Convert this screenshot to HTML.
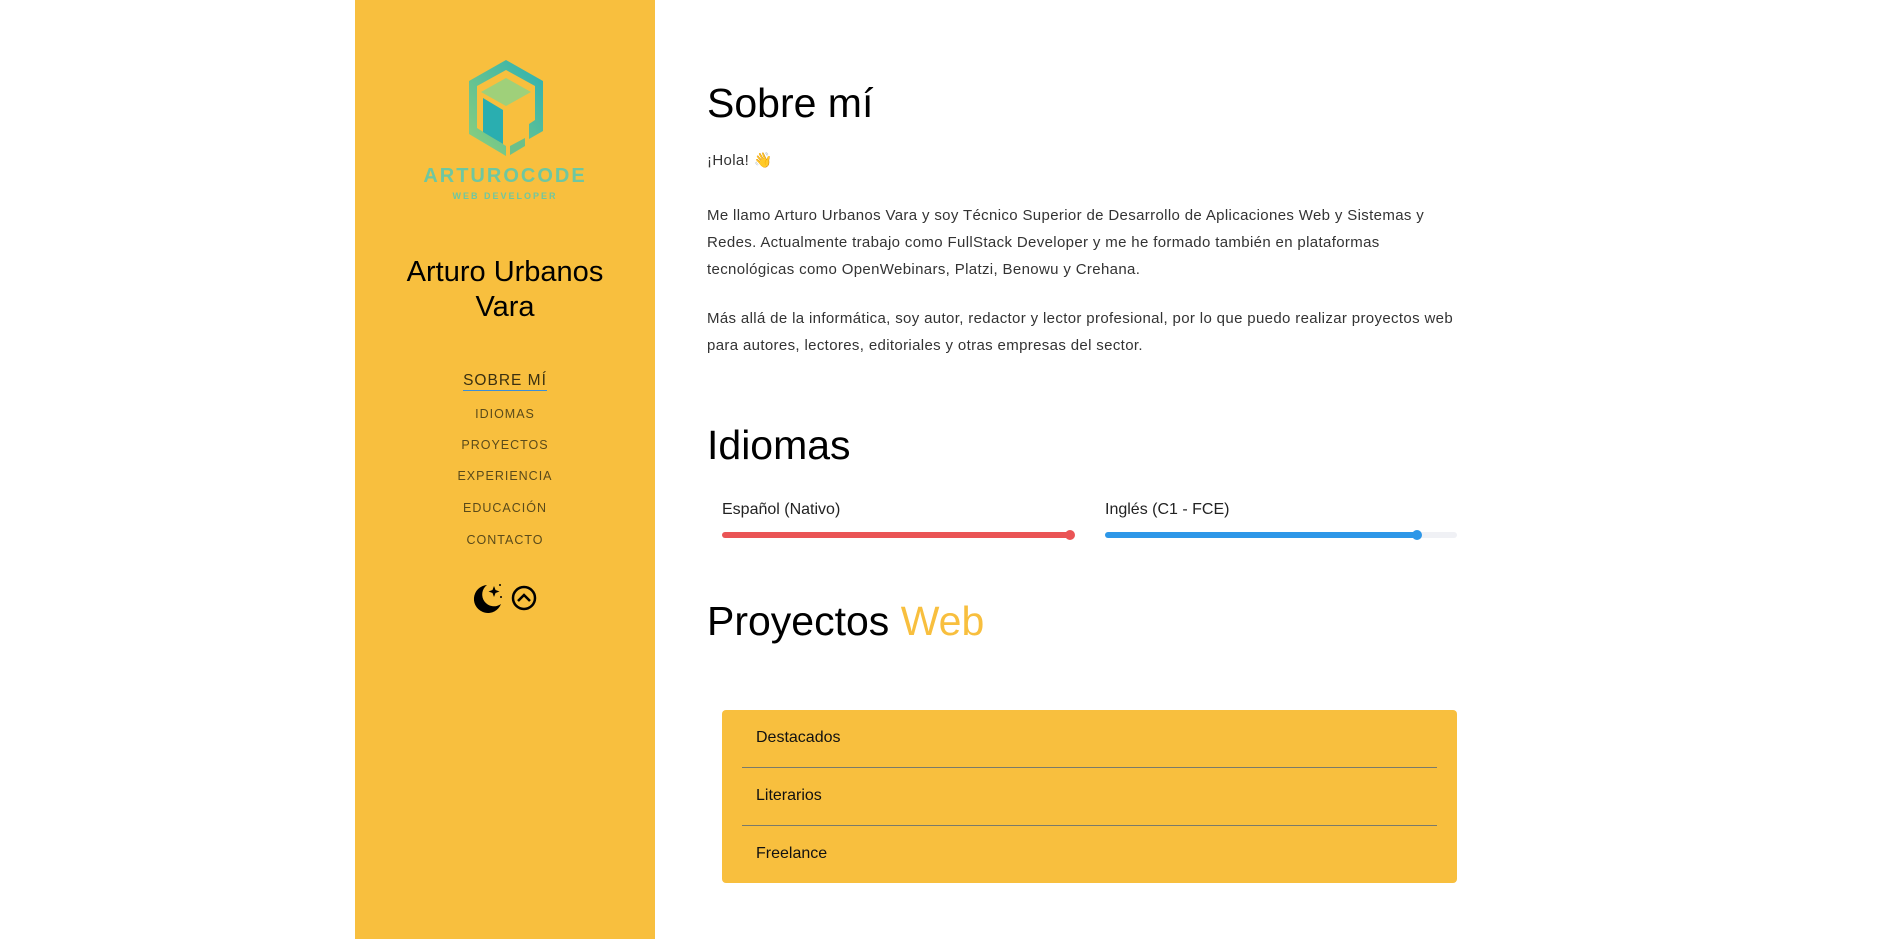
<!DOCTYPE html>
<html><head><meta charset="utf-8"><style>
*{margin:0;padding:0;box-sizing:border-box}
body{width:1879px;height:939px;background:#fff;font-family:"Liberation Sans",sans-serif;position:relative;overflow:hidden;color:#111}
.side{position:absolute;left:355px;top:0;width:300px;height:939px;background:#F8BF3E}
.abs{position:absolute}
.c{left:0;width:300px;text-align:center}
.nav{color:#5a4a1a;font-size:12.5px;letter-spacing:1px}
p.t{font-size:15px;color:#333;line-height:27px;width:760px;letter-spacing:0.35px}
h1{font-weight:normal;font-size:41px;color:#000;position:absolute;left:707px}
.bar{position:absolute;height:6px;border-radius:3px}
.dot{position:absolute;width:10px;height:10px;border-radius:5px}
</style></head><body>
<div class="side">
<svg class="abs" style="left:108px;top:56px" width="86" height="104" viewBox="0 0 86 104">
<defs><linearGradient id="g" x1="0" y1="1" x2="1" y2="0"><stop offset="0" stop-color="#8fd07a"/><stop offset="1" stop-color="#2bb0b4"/></linearGradient></defs>
<path d="M43 4 L80 25 L80 75 L66 83 L66 68 L72 64 L72 30 L43 14 L14 30 L14 72 L43 90 L43 100 L6 78 L6 25 Z" fill="url(#g)"/>
<path d="M43 22 L68 36 L43 50 L18 36 Z" fill="#9fd07a"/>
<path d="M20 42 L40 54 L40 88 L20 76 Z" fill="#2aaeb0"/>
<path d="M47 90 L62 82 L62 90 L47 99 Z" fill="#6cc08a"/>
</svg>
<div class="abs c" style="top:165px;font-size:20px;font-weight:bold;letter-spacing:2px;color:#6fc7a0">ARTUROCODE</div>
<div class="abs c" style="top:191px;font-size:9px;font-weight:bold;letter-spacing:2px;color:#6fc7a0">WEB DEVELOPER</div>
<div class="abs c" style="top:255px;font-size:29px;line-height:35px;color:#000">Arturo Urbanos<br>Vara</div>
<div class="abs c" style="top:372px;font-size:15.5px;letter-spacing:1px;color:#3a3010"><span style="border-bottom:1px solid #3a8fd8;padding-bottom:1px">SOBRE MÍ</span></div>
<div class="abs c nav" style="top:407px">IDIOMAS</div>
<div class="abs c nav" style="top:438px">PROYECTOS</div>
<div class="abs c nav" style="top:469px">EXPERIENCIA</div>
<div class="abs c nav" style="top:501px">EDUCACIÓN</div>
<div class="abs c nav" style="top:533px">CONTACTO</div>
<svg class="abs" style="left:112px;top:580px" width="80" height="36" viewBox="0 0 80 36">
<path d="M20 5 A14 14 0 1 0 34 24 A11 11 0 0 1 20 5 Z" fill="#000"/>
<path d="M27 6 l1.5 4 4 1.5 -4 1.5 -1.5 4 -1.5 -4 -4 -1.5 4 -1.5Z" fill="#000"/>
<circle cx="33" cy="5" r="1" fill="#000"/><circle cx="34" cy="17" r="1" fill="#000"/>
<circle cx="57" cy="18" r="11" fill="none" stroke="#000" stroke-width="2.5"/>
<path d="M51 21 L57 15 L63 21" fill="none" stroke="#000" stroke-width="2.5"/>
</svg>
</div>
<h1 style="top:80px">Sobre mí</h1>
<p class="t abs" style="left:707px;top:147px">¡Hola! 👋</p>
<p class="t abs" style="left:707px;top:202px">Me llamo Arturo Urbanos Vara y soy Técnico Superior de Desarrollo de Aplicaciones Web y Sistemas y Redes. Actualmente trabajo como FullStack Developer y me he formado también en plataformas tecnológicas como OpenWebinars, Platzi, Benowu y Crehana.</p>
<p class="t abs" style="left:707px;top:305px">Más allá de la informática, soy autor, redactor y lector profesional, por lo que puedo realizar proyectos web para autores, lectores, editoriales y otras empresas del sector.</p>
<h1 style="top:422px">Idiomas</h1>
<div class="abs" style="left:722px;top:501px;font-size:16px;color:#222">Español (Nativo)</div>
<div class="abs" style="left:1105px;top:501px;font-size:16px;color:#222">Inglés (C1 - FCE)</div>
<div class="bar" style="left:722px;top:532px;width:350px;background:#ea5455"></div>
<div class="dot" style="left:1065px;top:530px;background:#ea5455"></div>
<div class="bar" style="left:1105px;top:532px;width:352px;background:#f0f1f5"></div>
<div class="bar" style="left:1105px;top:532px;width:312px;background:#2d97e8"></div>
<div class="dot" style="left:1412px;top:530px;background:#2d97e8"></div>
<h1 style="top:598px">Proyectos <span style="color:#F8BF3E">Web</span></h1>
<div class="abs" style="left:722px;top:710px;width:735px;height:173px;background:#F8BF3E;border-radius:4px">
<div class="abs" style="left:34px;top:19px;font-size:16px">Destacados</div>
<div class="abs" style="left:20px;top:57px;width:695px;height:1px;background:#7a7a6a"></div>
<div class="abs" style="left:34px;top:77px;font-size:16px">Literarios</div>
<div class="abs" style="left:20px;top:115px;width:695px;height:1px;background:#7a7a6a"></div>
<div class="abs" style="left:34px;top:135px;font-size:16px">Freelance</div>
</div>
</body></html>
